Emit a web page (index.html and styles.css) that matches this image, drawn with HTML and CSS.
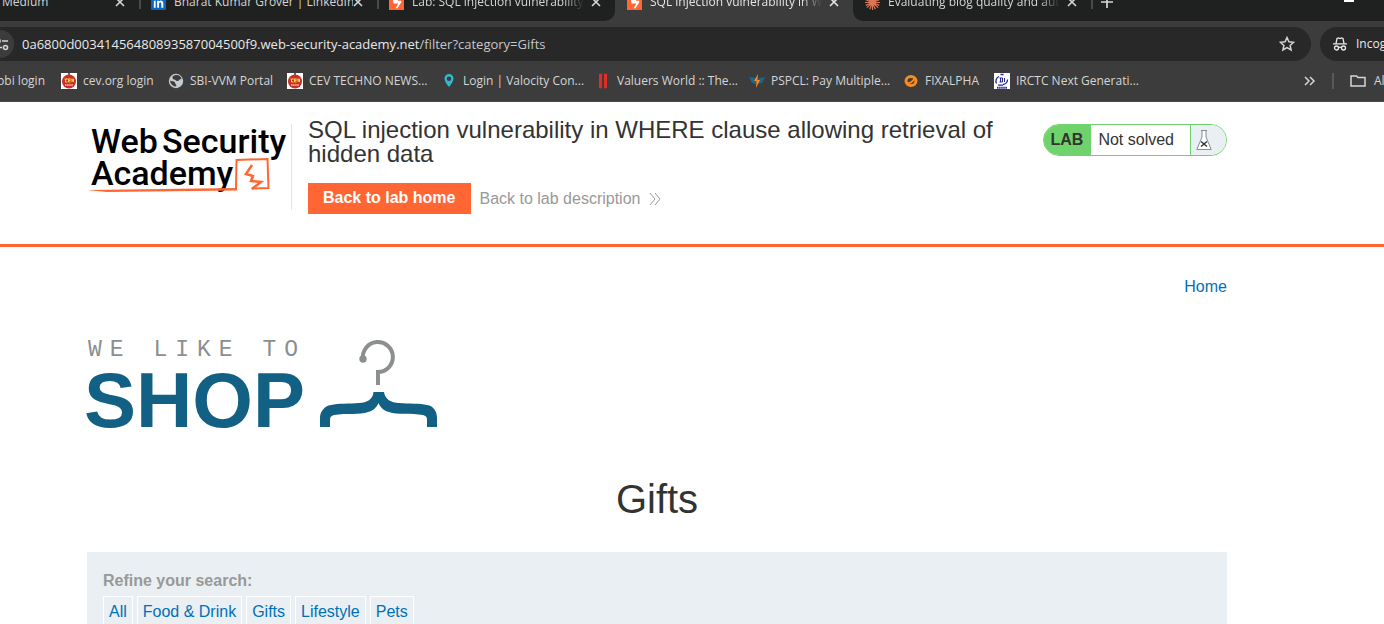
FILE: index.html
```html
<!DOCTYPE html>
<html lang="en">
<head>
<meta charset="utf-8">
<title>SQL injection vulnerability in WHERE clause allowing retrieval of hidden data</title>
<link rel="stylesheet" href="styles.css">
</head>
<body>
<svg width="0" height="0" class="defs" aria-hidden="true">
  <symbol id="close" viewBox="0 0 10 10"><path d="M1 1l8 8M9 1l-8 8" fill="none" stroke="currentColor" stroke-width="1.6"/></symbol>
  <symbol id="burp" viewBox="0 0 16 16"><path fill="#ff6633" d="M0 0h16v16H0z"/><path fill="#fff" d="M8 1v4H4l1 4h5l-3 5h2l4-6V6H9.500V1z"/></symbol>
  <symbol id="cev" viewBox="0 0 16 16"><path fill="#fff" d="M0 0h16v16H0z"/><path fill="#666" d="M7 0h2v3H7z"/><circle cx="8" cy="8.5" r="7" fill="#c9302a"/><path d="M3 6h10" stroke="#e9713c"/><path d="M6.5 6H4.500v3h2M9.500 6H7.500v3h2M7.500 7.500h2M11 9V6l1.500 3V6" fill="none" stroke="#f3d33d"/><path d="M4 12h8" stroke="#f6c9b8" stroke-width="1.500" stroke-dasharray="1.500 .6"/></symbol>
</svg>

<header class="browser">
  <div class="tabs">
    <div class="tab first"><span class="title">Medium</span><button class="close" aria-label="Close tab"><svg width="10" height="10"><use href="#close"/></svg></button></div>
    <div class="tab"><svg class="fav" viewBox="0 0 16 16"><rect width="16" height="16" rx="1" fill="#0a66c2"/><path fill="#fff" d="M3 6h2v7.500H3zM3 3h2v2H3zM6.500 6h2v1c1-1.600 4.600-1.600 4.600 2v4.500H11V9.600c0-2-2.400-2-2.400 0v3.900h-2z"/></svg><span class="title">Bharat Kumar Grover | LinkedIn</span><button class="close" aria-label="Close tab"><svg width="10" height="10"><use href="#close"/></svg></button></div>
    <div class="tab last-before"><svg class="fav"><use href="#burp"/></svg><span class="title">Lab: SQL injection vulnerability in WHERE</span><button class="close" aria-label="Close tab"><svg width="10" height="10"><use href="#close"/></svg></button></div>
    <div class="tab active"><svg class="fav"><use href="#burp"/></svg><span class="title">SQL injection vulnerability in WHERE clause</span><button class="close" aria-label="Close tab"><svg width="10" height="10"><use href="#close"/></svg></button></div>
    <div class="tab after"><svg class="fav" viewBox="0 0 16 16"><path d="M8 0v16M0 8h16M2 2.500l12 11M14 2.500l-12 11M5 .8l6 14.400M11 .8L5 15.200M.8 5l14.400 6M15.200 5L.8 11" stroke="#d97757" stroke-width="1.300"/></svg><span class="title">Evaluating blog quality and authenticity</span><button class="close" aria-label="Close tab"><svg width="10" height="10"><use href="#close"/></svg></button></div>
    <button class="new-tab" aria-label="New tab"><svg width="12" height="12" viewBox="0 0 12 12"><path d="M6 0v12M0 6h12" stroke="currentColor" stroke-width="1.700"/></svg></button>
    <button class="minimize" aria-label="Minimize"><svg width="10" height="2"><path d="M0 0h10v2H0z" fill="#fff"/></svg></button>
  </div>

  <div class="toolbar">
    <div class="omnibox">
      <button class="site-info" aria-label="Site information"><svg width="14" height="14" viewBox="0 0 14 14" fill="none" stroke="currentColor" stroke-width="1.600"><circle cx="3" cy="4" r="2"/><path d="M7 4h6M1 10.500h6"/><circle cx="10.500" cy="10.500" r="2"/></svg></button>
      <div class="url">0a6800d00341456480893587004500f9.web-security-academy.net<span>/filter?category=Gifts</span></div>
      <button class="star" aria-label="Bookmark this page"><svg width="16" height="16" viewBox="0 0 16 16" fill="none" stroke="currentColor" stroke-width="1.500"><path d="M8 1.500l1.900 4.300 4.700.5-3.500 3.100 1 4.600L8 11.600 3.900 14l1-4.600L1.400 6.300l4.700-.5z"/></svg></button>
    </div>
    <div class="incognito"><svg width="14" height="14" viewBox="0 0 14 14" fill="none" stroke="currentColor" stroke-width="1.300"><path d="M3 6.500l1-5 1.500-.5 1.500.5L8.500 1l1.500.5 1 5M0 6.800h14"/><circle cx="3.500" cy="11" r="2"/><circle cx="10.500" cy="11" r="2"/><path d="M5.500 10.600q1.500-.8 3 0"/></svg><span>Incognito</span></div>
  </div>

  <nav class="bookmarks" aria-label="Bookmarks">
    <a href="#" class="cut">bbi login</a>
    <a href="#"><svg class="ico"><use href="#cev"/></svg><span>cev.org login</span></a>
    <a href="#"><svg class="ico" viewBox="0 0 16 16"><circle cx="8" cy="8" r="7.200" fill="#c7cacd"/><path fill="#3c3c3c" d="M8.500 2c-3 0-4.500 1.500-4 3.200.4 1.300 2.500 1 3.500 2.300.8 1 2.700.6 3.200-.5.4-.8 1.300-1.200 2.400-1C13 3.500 11 2 8.500 2zM2 7.500c.4 3.500 3 6 6 6 .7-1 .3-1.600-.5-2.400-.8-.9 0-1.800-1.200-2.400C4.800 8 3.500 8.600 2 7.500z"/></svg><span>SBI-VVM Portal</span></a>
    <a href="#"><svg class="ico"><use href="#cev"/></svg><span>CEV TECHNO NEWS...</span></a>
    <a href="#"><svg class="ico" viewBox="0 0 16 16"><path fill="#31b9cf" fill-rule="evenodd" d="M8 1a4.500 4.500 0 0 0-4.500 4.500C3.500 9 8 14 8 14s4.500-5 4.500-8.500A4.500 4.500 0 0 0 8 1zm0 2.500a2 2 0 1 1 0 4.500 2 2 0 0 1 0-4.500z"/></svg><span>Login | Valocity Con...</span></a>
    <a href="#"><svg class="ico" viewBox="0 0 16 16"><path fill="#e52b25" d="M4 1l3-.5v15L4 15zM9 .5l3 .5v14l-3 .5z"/></svg><span>Valuers World :: The...</span></a>
    <a href="#"><svg class="ico" viewBox="0 0 16 16"><path fill="#17678e" d="M0 4l7 1 1 3-1 3-4-1zM16 4l-6 1-2 6 5-1z"/><path fill="#f58a25" d="M9 1L5 8h2.500L7 15l4-8H8.500z"/></svg><span>PSPCL: Pay Multiple...</span></a>
    <a href="#"><svg class="ico" viewBox="0 0 16 16"><ellipse cx="8" cy="8" rx="5" ry="4.600" fill="none" stroke="#f78d20" stroke-width="3"/><path d="M4 10Q8 11 12 5" fill="none" stroke="#f78d20" stroke-width="2"/></svg><span>FIXALPHA</span></a>
    <a href="#"><svg class="ico" viewBox="0 0 16 16"><path fill="#fff" d="M0 0h16v16H0z"/><path d="M2.500 10.500A5 5 0 0 1 5 3.500M9 11.500a5 5 0 0 0 4.500-5M4 12.200h5M6.500 1.500h3" fill="none" stroke="#22258f" stroke-width="1.300"/><path d="M6.500 5v4M5.500 5h3v4h-3M10.500 5v4" fill="none" stroke="#22258f"/><path d="M3 14.800h10" stroke="#22258f" stroke-width="2" stroke-dasharray="1.500 .6"/></svg><span>IRCTC Next Generati...</span></a>
    <button class="more" aria-label="More bookmarks"><svg width="12" height="10" viewBox="0 0 12 10"><path d="M1 1l4 4-4 4M6 1l4 4-4 4" fill="none" stroke="currentColor" stroke-width="1.500"/></svg></button>
    <a href="#" class="all"><svg class="ico" viewBox="0 0 16 16"><path d="M1 3.500V13h14V4.500H8L6.500 3H1z" fill="none" stroke="currentColor" stroke-width="1.500"/></svg><span>All Bookmarks</span></a>
  </nav>
</header>

<section class="lab">
  <div class="wrap lab-row">
    <a href="#" class="academy" aria-label="Web Security Academy">
      <svg width="204" height="86" viewBox="0 0 204 86">
        <g class="academy-text"><text x="4" y="29">Web</text><text x="75" y="29">Security</text><text x="4" y="61">Academy</text></g>
        <path d="M149 65l.5-29 31-1 1 29-17 .5" fill="none" stroke="#ff6633" stroke-width="2"/>
        <path fill="#ff6633" d="M0 66l150-2v2.500L20 68z"/>
        <path d="M165 41l-6 9 7 2-2 5 10 1-9 7" fill="none" stroke="#ff6633" stroke-width="2.500"/>
      </svg>
    </a>
    <div class="lab-title">
      <h2>SQL injection vulnerability in WHERE clause allowing retrieval of hidden data</h2>
      <div class="lab-links">
        <a href="#" class="lab-home">Back to lab home</a>
        <a href="#" class="lab-desc">Back to lab description<svg width="12" height="12" viewBox="0 0 12 12"><path d="M1 0l5 6-5 6M6 0l5 6-5 6" fill="none" stroke="currentColor"/></svg></a>
      </div>
    </div>
    <div class="status"><strong>LAB</strong><span>Not solved</span><i><svg width="16" height="20" viewBox="0 0 16 20"><path d="M5 .5h6M6 1v6L.8 19.500h14.400L10 7V1" fill="#fff" stroke="#858e92"/><path d="M5 11.500l6 5M11 11.500l-6 5" stroke="#333" stroke-width="1.500"/></svg></i></div>
  </div>
</section>

<main class="wrap">
  <nav class="top-links"><a href="#">Home</a></nav>
  <svg class="shop" width="351" height="92" viewBox="0 0 351 92" role="img" aria-label="We like to shop">
    <text class="like" x="1" y="17">WE LIKE TO</text>
    <text class="shop-word" x="-3" y="88">SHOP</text>
    <circle cx="276" cy="20" r="3.700" fill="#8c8f90"/>
    <path d="M276 20A15 15 0 1 1 291 33V46" fill="none" stroke="#8c8f90" stroke-width="4"/>
    <path fill="#126084" d="M286 53h11c1 7 7 11 15 11 10 1 21 0 28 2 7 1 10 7 10 13v9h-10v-7c0-3-1-4-4-5-12-2-26 0-34-3-5-1-9-5-10.500-9-1.500 4-5.500 8-10.500 9-8 3-22 1-34 3-3 1-4 2-4 5v7h-10v-9c0-6 4-12 11-13 7-2 18-1 28-2 8 0 14-4 14.500-11z"/>
  </svg>
  <h1>Gifts</h1>
  <section class="search">
    <p>Refine your search:</p>
    <div class="filters"><a href="#">All</a><a href="#">Food &amp; Drink</a><a href="#">Gifts</a><a href="#">Lifestyle</a><a href="#">Pets</a></div>
  </section>
</main>
</body>
</html>
```
FILE: styles.css
```css
* { box-sizing: border-box; }
body { margin: 0; background: #fff; color: #333332; font: 16px/20px "Liberation Sans", Arial, sans-serif; overflow: hidden; }
a { color: #0071b8; text-decoration: none; }
button { border: 0; padding: 0; background: none; color: inherit; font: inherit; display: flex; flex: none; align-items: center; justify-content: center; }
svg { flex: none; display: block; }
.defs { position: absolute; }

.browser { background: #3c3c3c; color: #d5d5d5; font: 12px/16px "Open Sans", "Noto Sans", sans-serif; border-bottom: 1px solid #4a4a4a; overflow: hidden; }
.tabs { display: flex; align-items: flex-end; height: 21px; overflow: hidden; background: #3c3c3c; }
.tab { display: flex; flex: 0 0 238px; min-width: 0; align-items: center; height: 38px; padding: 0 14px 0 12px; background: #1f2120; }
.tab.first { flex-basis: 139px; padding-left: 2px; }
.tab .title { flex: 1; min-width: 0; overflow: hidden; white-space: nowrap; mask-image: linear-gradient(to right, #000 85%, transparent 96%); }
.tab.first .title, .tab:nth-child(2) .title { mask-image: none; }
.tab:nth-child(2), .tab:nth-child(3) { background: linear-gradient(#484a49, #484a49) left bottom 12px / 2px 18px no-repeat #1f2120; }
.tab.active { background: #3c3c3c; color: #e5e5e5; }
.tab.last-before { border-radius: 0 0 10px 0; }
.tab.after { border-radius: 0 0 0 10px; }
.fav { width: 15px; height: 15px; margin-right: 8px; }
.close { width: 10px; height: 16px; }
.new-tab { width: 32px; height: 38px; background: linear-gradient(#484a49, #484a49) left bottom 12px / 2px 18px no-repeat #1f2120; }
.minimize { flex: 1; height: 38px; padding: 0 30px 2px 0; justify-content: flex-end; background: #1f2120; }

.toolbar { display: flex; gap: 9px; padding: 6px 0 0; }
.omnibox { display: flex; flex: 1; align-items: center; height: 34px; padding-right: 16px; background: #282828; border-radius: 0 17px 17px 0; }
.site-info { width: 14px; height: 28px; justify-content: flex-end; padding-right: 5px; background: #3c3c3c; border-radius: 0 14px 14px 0; }
.url { flex: 1; padding-left: 8px; color: #e8e8e8; font-size: 13px; white-space: nowrap; }
.url span { color: #c5c7c8; }
.incognito { display: flex; flex: 0 0 64px; align-items: center; gap: 9px; height: 34px; padding-left: 13px; overflow: hidden; background: #282828; border-radius: 17px 0 0 17px; color: #e8e8e8; }
.bookmarks { display: grid; grid-template-columns: 61px 107px 119px 154px 154px 154px 154px 91px 1fr 28px 52px; align-items: center; height: 40px; }
.bookmarks a { display: flex; align-items: center; gap: 6px; color: #d5d5d5; white-space: nowrap; overflow: hidden; }
.bookmarks .cut { justify-content: flex-end; padding-right: 16px; }
.ico { width: 16px; height: 16px; }
.bookmarks .more { justify-content: flex-start; }
.bookmarks .all { gap: 8px; border-left: 2px solid #5a5a5a; padding-left: 16px; }

.wrap { padding: 0 157px 0 87px; }
.lab { padding: 22px 0 30px; border-bottom: 3px solid #ff6633; }
.lab-row { display: flex; align-items: flex-start; }
.academy { display: block; border-right: 1px solid #e2e4e5; }
.academy-text { font: 500 34px Roboto, sans-serif; fill: #000; }
.lab-title { flex: 1; padding: 0 40px 0 16px; }
.lab-title h2 { margin: -6px 0 17px; font-size: 24px; line-height: 24px; font-weight: 400; }
.lab-links { display: flex; align-items: center; gap: 8px; }
.lab-home { padding: 5px 16px 6px 15px; background: #ff6633; color: #fff; font-weight: 700; }
.lab-desc { display: flex; align-items: center; gap: 9px; color: #999; }
.status { display: flex; height: 32px; line-height: 30px; border: 1px solid #70d26c; border-radius: 16px; overflow: hidden; }
.status strong { padding: 0 8px 0 7px; background: #70d26c; }
.status span { padding: 0 16px 0 7px; }
.status i { display: flex; align-items: center; width: 36px; padding-left: 5px; background: #e9eff2; border-left: 1px solid #70d26c; }

.top-links { padding: 30px 0 42px; text-align: right; }
.shop { overflow: visible; }
.like { font: 23px "Liberation Mono", monospace; letter-spacing: 8px; fill: #8c8f90; }
.shop-word { font: 700 78px "Liberation Sans", Arial, sans-serif; fill: #126084; }
h1 { margin: 45px 0 29px; font-size: 40px; line-height: 47px; font-weight: 400; text-align: center; }
.search { padding: 19px 16px 20px; background: #e9eff2; }
.search p { margin: 0 0 5px; color: #999; font-weight: 700; }
.filters { display: flex; gap: 4px; }
.filters a { padding: 5px; border: 1px solid #fff; }
```
